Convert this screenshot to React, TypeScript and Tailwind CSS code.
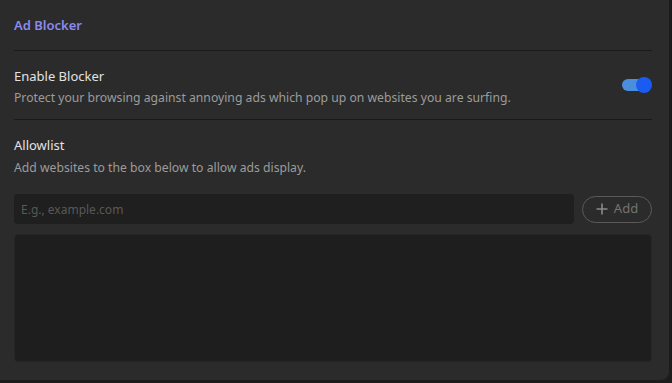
const App = () => {
  return (
    <div className="h-[383px] w-[672px] bg-[#1c1c1c] overflow-hidden" style={{ fontFamily: '"Noto Sans", "Open Sans", sans-serif' }}>
      <div className="h-[380px] w-[669px] bg-[#2b2b2b] rounded-br-lg pl-[14px] pr-[17px]">
        <div className="h-[51px] flex items-center pt-[2px] border-b border-[#1a1a1a]">
          <h1 className="text-[13px] font-semibold text-[#8a8af0]">Ad Blocker</h1>
        </div>

        <div className="h-[69px] flex items-center justify-between border-b border-[#1a1a1a]">
          <div className="pt-[3px]">
            <div className="text-[13px] text-[#e2e2e2] leading-[18px]">Enable Blocker</div>
            <div className="text-[12.2px] text-[#9c9c9c] leading-[18px] mt-[4px]">
              Protect your browsing against annoying ads which pop up on websites you are surfing.
            </div>
          </div>
          <div className="relative w-[30px] h-[16px]">
            <div className="absolute left-0 top-[2px] w-[24px] h-[12px] rounded-full bg-[#4a8fde]" />
            <div className="absolute right-0 top-0 w-[16px] h-[16px] rounded-full bg-[#1a5bf2]" />
          </div>
        </div>

        <div className="pt-[16px]">
          <div className="text-[13px] text-[#e2e2e2] leading-[18px]">Allowlist</div>
          <div className="text-[12.2px] text-[#9c9c9c] leading-[18px] mt-[5px]">
            Add websites to the box below to allow ads display.
          </div>
        </div>

        <div className="flex items-center gap-[8px] mt-[17px]">
          <input
            className="flex-1 h-[30px] rounded bg-[#1f1f1f] px-[7px] text-[12px] text-[#cccccc] placeholder:text-[#585858] outline-none"
            placeholder="E.g., example.com"
          />
          <button className="flex items-center gap-[6px] h-[27px] w-[70px] justify-center rounded-full border-[1.5px] border-[#5a5a5a] text-[13px] text-[#747474]">
            <svg width="12" height="12" viewBox="0 0 12 12" fill="none" stroke="#8a8a8a" strokeWidth="1.6">
              <path d="M6 0.5v11M0.5 6h11" />
            </svg>
            Add
          </button>
        </div>

        <div className="mt-[10px] h-[128px] rounded bg-[#1e1e1e] border border-[#262626]" />
      </div>
    </div>
  );
};

export default App;
